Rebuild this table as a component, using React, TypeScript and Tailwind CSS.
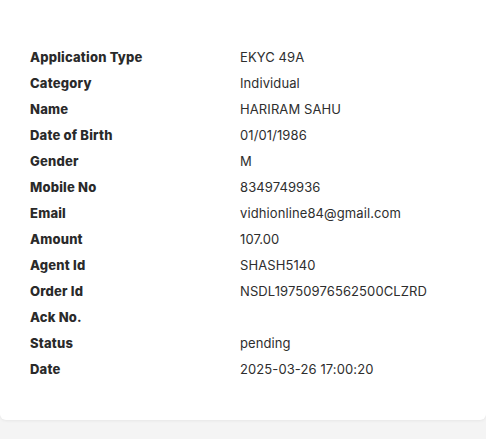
import React from 'react';

const rows: [string, string][] = [
  ['Application Type', 'EKYC 49A'],
  ['Category', 'Individual'],
  ['Name', 'HARIRAM SAHU'],
  ['Date of Birth', '01/01/1986'],
  ['Gender', 'M'],
  ['Mobile No', '8349749936'],
  ['Email', 'vidhionline84@gmail.com'],
  ['Amount', '107.00'],
  ['Agent Id', 'SHASH5140'],
  ['Order Id', 'NSDL19750976562500CLZRD'],
  ['Ack No.', ''],
  ['Status', 'pending'],
  ['Date', '2025-03-26 17:00:20'],
];

export default function App() {
  return (
    <div className="min-h-[439px] bg-[#f4f4f4] font-['Inter',sans-serif]">
      <div className="bg-white rounded-b-md shadow-[0_1px_3px_rgba(0,0,0,0.06)] pt-[45px] pb-[37px] px-[30px]">
        {rows.map(([label, value]) => (
          <div key={label} className="grid grid-cols-[210px_1fr] h-[26px] items-center text-[13px]">
            <div className="font-extrabold tracking-[0.2px] text-[#2a2a2a]">{label}</div>
            <div className="text-[#2e2e2e] tracking-[0.1px]">{value}</div>
          </div>
        ))}
      </div>
    </div>
  );
}
